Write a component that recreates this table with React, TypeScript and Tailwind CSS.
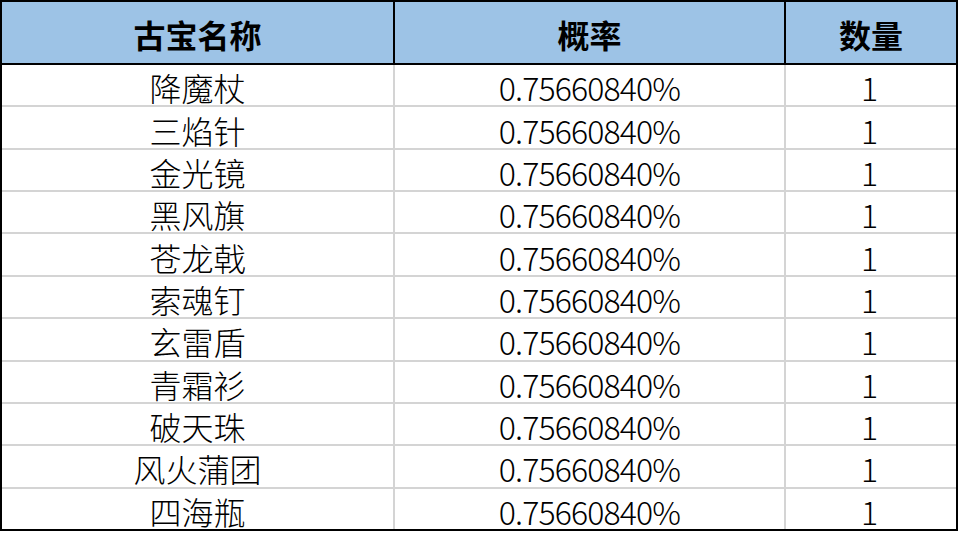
const rows = [
  '降魔杖',
  '三焰针',
  '金光镜',
  '黑风旗',
  '苍龙戟',
  '索魂钉',
  '玄雷盾',
  '青霜衫',
  '破天珠',
  '风火蒲团',
  '四海瓶',
]

const font = { fontFamily: '"Noto Sans CJK SC", "Noto Sans", sans-serif' }

export default function App() {
  return (
    <div className="w-[959px] h-[533px] bg-white" style={font}>
      <div className="w-[958px] border-2 border-black text-black">
        {/* 表头 */}
        <div className="grid grid-cols-[393px_391px_170px] h-[63px] bg-[#9dc3e6] border-b-2 border-black text-[32px] font-bold leading-none">
          <div className="flex items-center justify-center border-r-2 border-black pt-[3px]">古宝名称</div>
          <div className="flex items-center justify-center border-r-2 border-black pt-[3px]">概率</div>
          <div className="flex items-center justify-center pt-[3px]">数量</div>
        </div>

        {/* 数据行 */}
        <div className="flex flex-col h-[464px]">
          {rows.map((name, i) => (
            <div
              key={name}
              className={`flex-1 grid grid-cols-[393px_391px_170px] text-[32px] font-light leading-none ${
                i < rows.length - 1 ? 'border-b-2 border-[#d4d4d4]' : ''
              }`}
            >
              <div className="flex items-center justify-center border-r-2 border-[#d4d4d4] pt-[4px]">{name}</div>
              <div className="flex items-center justify-center border-r-2 border-[#d4d4d4] pt-[4px] tracking-[-0.85px]">
                0.75660840%
              </div>
              <div className="flex items-center justify-center pt-[4px] pr-[3px]">1</div>
            </div>
          ))}
        </div>
      </div>
    </div>
  )
}
